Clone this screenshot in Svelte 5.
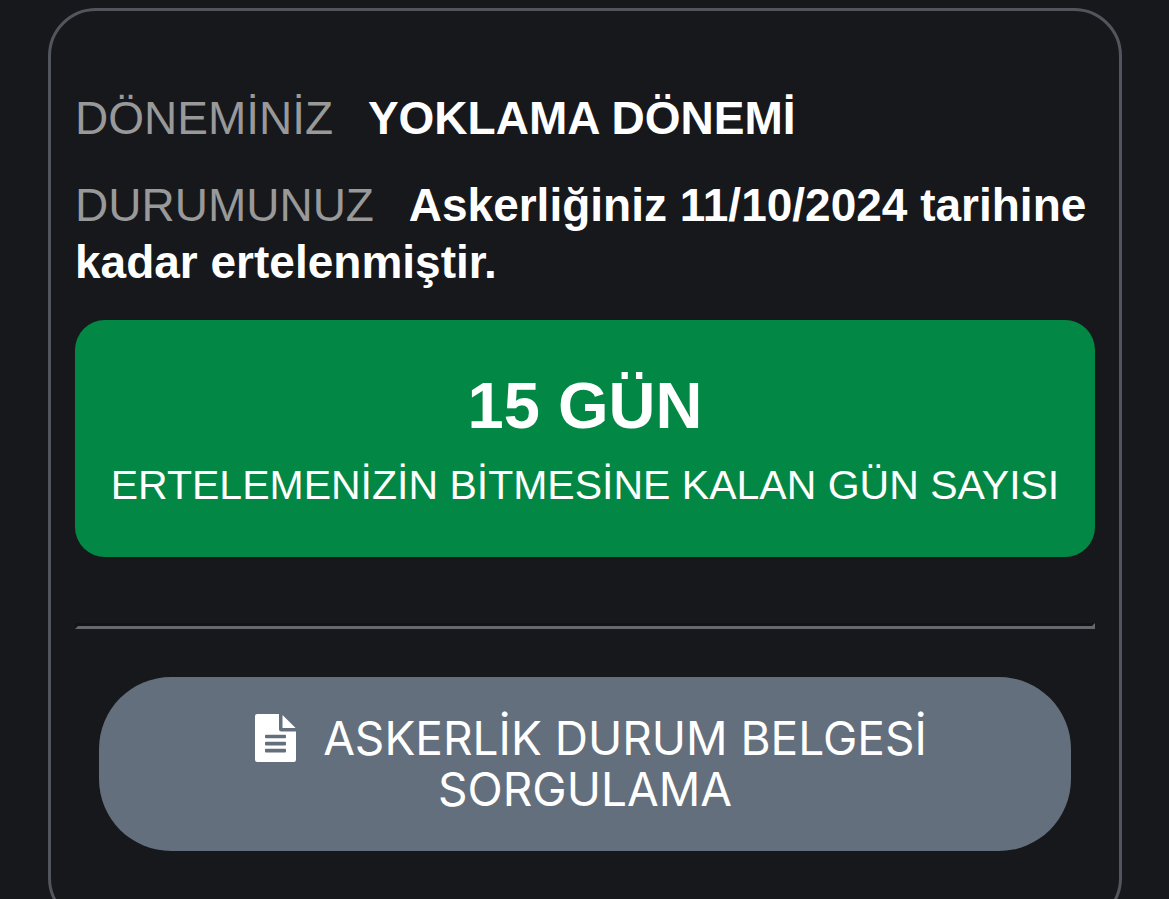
<script>
	const rows = [
		{ label: 'DÖNEMİNİZ', value: 'YOKLAMA DÖNEMİ' },
		{
			label: 'DURUMUNUZ',
			value: 'Askerliğiniz 11/10/2024 tarihine kadar ertelenmiştir.'
		}
	];

	let daysLeft = $state(15);
</script>

<main>
	<section class="card">
		{#each rows as row}
			<p class="row">
				<span class="label">{row.label}</span>
				<strong>{row.value}</strong>
			</p>
		{/each}

		<div class="countdown">
			<strong>{daysLeft} GÜN</strong>
			<span>ERTELEMENİZİN BİTMESİNE KALAN GÜN SAYISI</span>
		</div>

		<hr />

		<button type="button">
			<svg viewBox="0 0 41 48" width="41" height="48" aria-hidden="true">
				<path
					fill="currentColor"
					fill-rule="evenodd"
					d="M2.2 0H24V15a2.5 2.5 0 0 0 2.5 2.5H41V45.8A2.2 2.2 0 0 1 38.8 48H2.2A2.2 2.2 0 0 1 0 45.8V2.2A2.2 2.2 0 0 1 2.2 0ZM11 20.7a1 1 0 0 0-1 1v1.6a1 1 0 0 0 1 1H30a1 1 0 0 0 1-1v-1.6a1 1 0 0 0-1-1ZM11 27.8a1 1 0 0 0-1 1v1.6a1 1 0 0 0 1 1H30a1 1 0 0 0 1-1v-1.6a1 1 0 0 0-1-1ZM11 34.8a1 1 0 0 0-1 1v1.6a1 1 0 0 0 1 1H30a1 1 0 0 0 1-1v-1.6a1 1 0 0 0-1-1Z"
				/>
				<path fill="currentColor" d="M27.5 1 40.6 13.9H27.5Z" />
			</svg>
			ASKERLİK DURUM BELGESİ SORGULAMA
		</button>
	</section>
</main>

<style>
	:global(body) {
		background: #17181b;
	}

	main {
		padding: 8px 47px 48px 48px;
		font-family: 'Liberation Sans', Arial, sans-serif;
		color: #fff;
	}

	.card {
		padding: 79px 24px 72px;
		border: 3px solid #52555d;
		border-radius: 48px;
	}

	.row {
		margin: 0;
		font-size: 46px;
		line-height: 57px;
	}

	.row + .row {
		margin-top: 30px;
	}

	.label {
		margin-right: 22px;
		color: #999;
	}

	.countdown {
		display: flex;
		flex-direction: column;
		align-items: center;
		gap: 15px;
		margin-top: 29px;
		padding: 47px 24px 46px;
		border-radius: 30px;
		background: #028844;
		text-align: center;
	}

	.countdown strong {
		font-size: 65px;
		line-height: 78px;
	}

	.countdown span {
		font-size: 41px;
		line-height: 51px;
	}

	hr {
		margin: 66px 0 48px;
		border: 3px solid;
		border-color: #121317 #66676d #66676d #121317;
	}

	button {
		display: block;
		width: calc(100% - 48px);
		margin: 0 24px;
		padding: 36px 72px;
		border: 0;
		border-radius: 72px;
		background: #646f7d;
		color: #fff;
		font-family: Inter, sans-serif;
		font-size: 46px;
		line-height: 51px;
		cursor: pointer;
	}

	svg {
		margin: 0 14px 0 12px;
		vertical-align: -7px;
	}
</style>
